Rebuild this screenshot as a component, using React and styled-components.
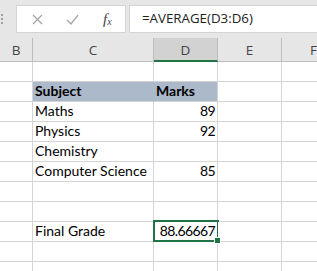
import React from "react";
import styled, { createGlobalStyle, css } from "styled-components";

const GlobalStyle = createGlobalStyle`
  html, body {
    margin: 0;
    padding: 0;
    background: #ffffff;
    overflow: hidden;
  }
`;

//Data
const columns = [
  { key: "B", width: "33px" },
  { key: "C", width: "121px" },
  { key: "D", width: "64px", selected: true },
  { key: "E", width: "64px" },
  { key: "F", width: "64px" },
];

const rows = [
  [],
  [{ col: 1, text: "Subject", bold: true, band: true }, { col: 2, text: "Marks", bold: true, band: true }],
  [{ col: 1, text: "Maths" }, { col: 2, text: "89", num: true }],
  [{ col: 1, text: "Physics" }, { col: 2, text: "92", num: true }],
  [{ col: 1, text: "Chemistry" }],
  [{ col: 1, text: "Computer Science" }, { col: 2, text: "85", num: true }],
  [],
  [],
  [{ col: 1, text: "Final Grade" }, { col: 2, text: "88.66667", num: true, active: true }],
  [],
  [],
];

const App = () => {
  const getCell = (row, col) => row.find((c) => c.col === col);
  return (
    <>
      <GlobalStyle />
      <Window>
        <FormulaBar>
          <Grip>
            <span />
            <span />
            <span />
          </Grip>
          <ActionBox>
            <ActionIcon>
              <svg width="11" height="11" viewBox="0 0 11 11">
                <path d="M1 1 L10 10 M10 1 L1 10" stroke="#a6a6a6" strokeWidth="1.3" fill="none" />
              </svg>
            </ActionIcon>
            <ActionIcon>
              <svg width="13" height="11" viewBox="0 0 13 11">
                <path d="M1 6 L5 10 L12 1" stroke="#a6a6a6" strokeWidth="1.3" fill="none" />
              </svg>
            </ActionIcon>
            <FxLabel>
              f<sub>x</sub>
            </FxLabel>
          </ActionBox>
          <FormulaInput>=AVERAGE(D3:D6)</FormulaInput>
        </FormulaBar>
        <Sheet $template={columns.map((c) => c.width).join(" ")}>
          {columns.map((c) => (
            <ColumnHeader key={c.key} $selected={c.selected}>
              {c.key}
            </ColumnHeader>
          ))}
          {rows.map((row, r) =>
            columns.map((c, i) => {
              const cell = getCell(row, i);
              const nextBand = getCell(row, i + 1);
              return (
                <Cell
                  key={`${r}-${c.key}`}
                  $band={cell && cell.band}
                  $joinRight={cell && cell.band && nextBand && nextBand.band}
                  $num={cell && cell.num}
                  $bold={cell && cell.bold}
                  $active={cell && cell.active}
                >
                  {cell ? cell.text : ""}
                </Cell>
              );
            })
          )}
        </Sheet>
      </Window>
    </>
  );
};

const Window = styled.div`
  width: 317px;
  height: 271px;
  overflow: hidden;
  display: flex;
  flex-direction: column;
  background: #ffffff;
`;

const FormulaBar = styled.div`
  flex-shrink: 0;
  height: 38px;
  background: #e6e6e6;
  display: flex;
  align-items: flex-start;
  padding-top: 5px;
  box-sizing: border-box;
`;

const Grip = styled.div`
  width: 16px;
  display: flex;
  flex-direction: column;
  gap: 2px;
  padding: 9px 0 0 1px;
  box-sizing: border-box;
  span {
    width: 2px;
    height: 2px;
    background: #a0a0a0;
  }
`;

const ActionBox = styled.div`
  width: 110px;
  height: 28px;
  box-sizing: border-box;
  background: #ffffff;
  border: 1px solid #d4d4d4;
  display: flex;
  align-items: center;
  padding-left: 15px;
`;

const ActionIcon = styled.div`
  width: 34px;
  display: flex;
  align-items: center;
`;

const FxLabel = styled.div`
  font-family: "Liberation Serif", serif;
  font-style: italic;
  font-size: 15px;
  color: #444444;
  margin-left: 3px;
  sub {
    font-size: 10px;
    vertical-align: -1px;
  }
`;

const FormulaInput = styled.div`
  flex: 1;
  height: 28px;
  margin-left: 3px;
  box-sizing: border-box;
  background: #ffffff;
  border: 1px solid #d4d4d4;
  border-right: none;
  padding-left: 12px;
  font-family: "Open Sans", sans-serif;
  font-size: 13.3px;
  line-height: 25px;
  color: #222222;
`;

const Sheet = styled.div`
  flex-shrink: 0;
  display: grid;
  grid-template-columns: ${({ $template }) => $template};
  grid-template-rows: 24px;
  grid-auto-rows: 20px;
`;

const ColumnHeader = styled.div`
  box-sizing: border-box;
  background: ${({ $selected }) => ($selected ? "#d2d2d2" : "#e6e6e6")};
  border-right: 1px solid #bdbdbd;
  border-bottom: ${({ $selected }) => ($selected ? "2px solid #217346" : "1px solid #bdbdbd")};
  display: flex;
  align-items: center;
  justify-content: center;
  padding-top: ${({ $selected }) => ($selected ? "1px" : "0")};
  font-family: "Open Sans", sans-serif;
  font-size: 13.5px;
  color: #444444;
`;

const Cell = styled.div`
  position: relative;
  box-sizing: border-box;
  border-right: 1px solid ${({ $joinRight }) => ($joinRight ? "#acb9ca" : "#d4d4d4")};
  border-bottom: 1px solid #d4d4d4;
  background: ${({ $band }) => ($band ? "#acb9ca" : "#ffffff")};
  display: flex;
  align-items: flex-end;
  justify-content: ${({ $num }) => ($num ? "flex-end" : "flex-start")};
  padding: 0 2px 1px 2px;
  font-family: Lato, sans-serif;
  font-size: 14px;
  line-height: 18px;
  letter-spacing: ${({ $num }) => ($num ? "-0.6px" : "0")};
  font-weight: ${({ $bold }) => ($bold ? 700 : 400)};
  color: #000000;
  white-space: nowrap;
  ${({ $active }) =>
    $active &&
    css`
      &::after {
        content: "";
        position: absolute;
        top: -2px;
        left: -1px;
        right: -2px;
        bottom: -1px;
        border: 2px solid #217346;
      }
      &::before {
        content: "";
        position: absolute;
        right: -4px;
        bottom: -3px;
        width: 5px;
        height: 5px;
        background: #217346;
        border: 1px solid #ffffff;
        z-index: 2;
      }
    `}
`;

export default App;
